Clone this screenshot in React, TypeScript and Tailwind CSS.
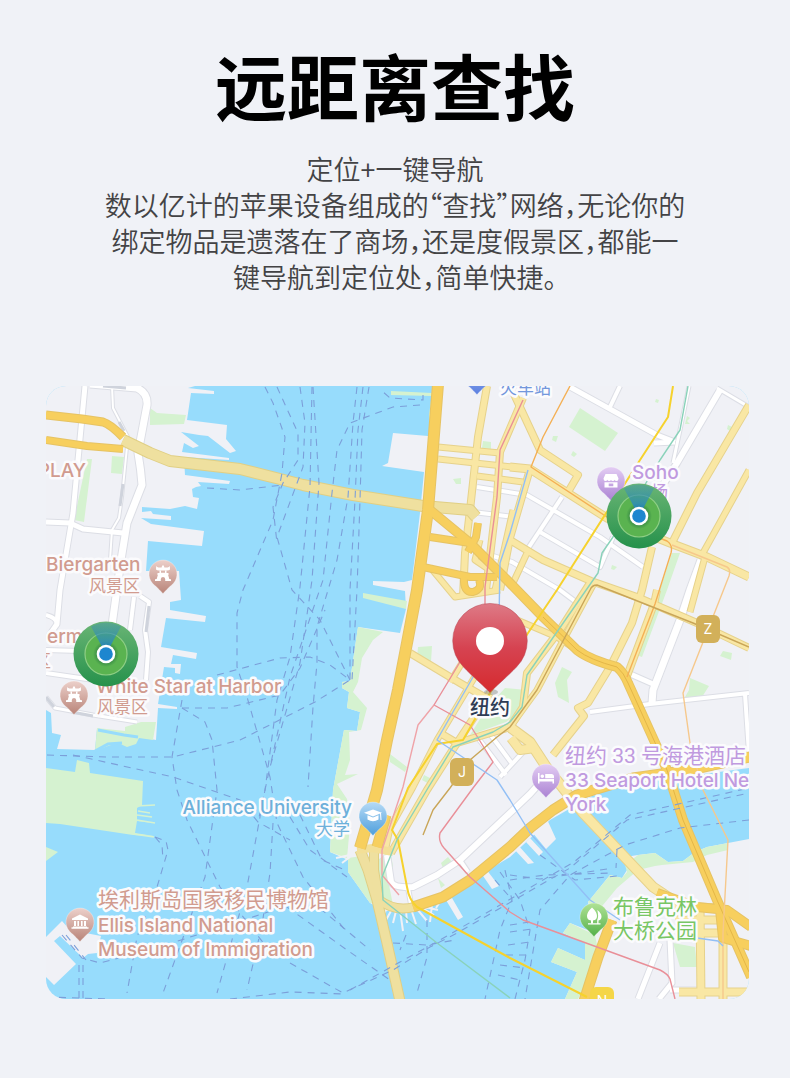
import React from 'react';

type Road = { d: string; w: number };
type Line = { d: string; color: string; w?: number };

const LAND = [
  'M46 386L195 386 188 388 214 391 214 394 191 393 187 420 227 425 226 439 236 451 230 453 208 436 199 435 181 432 199 446 193 448 184 443 182 452 229 458 229 460 184 457 185 475 230 481 229 484 198 482 201 486 196 487 192 489 193 497 199 498 197 509 185 506 170 509 142 507 142 512 151 511 153 514 171 516 171 520 141 518 151 524 204 531 202 546 148 541 146 571 179 571 181 600 170 602 170 610 206 616 205 622 166 618 161 647 197 653 196 659 173 655 171 664 181 664 180 674 175 673 175 668 164 667 158 704 177 707 177 709 158 708 156 740 97 729 95 750 57 749 61 735 52 733 51 713 46 710Z',
  'M46 937L62 921 70 930 101 936 97 953 88 954 83 958 60 936 54 941 76 964 54 985 46 977Z',
  'M432 386L431 421 428 436 393 433 388 463 382 466 424 472 420 513 412 580 404 582 373 581 373 585 405 591 406 609 400 633 358 627 350 681 342 682 342 688 349 692 347 708 360 712 357 731 344 730 333 790 330 852 348 860 348 872 370 903 385 911 427 909 457 890 480 875 510 857 550 820 590 797 620 785 749 768 749 386Z',
  'M749 839L728 843 707 847 695 852 683 861 668 862 655 853 638 855 625 857 627 870 622 878 610 875 588 902 595 933 570 923 563 933 585 943 585 960 558 948 551 962 577 972 565 999 749 999Z',
  'M518 845L534 863 528 864 514 849ZM530 838L543 852 539 856 526 842ZM545 815L556 839 546 849 532 832Z',
  'M452 898L463 917 458 920 446 900ZM486 869L499 886 492 889 481 873Z',
];

const PARKS = [
  'M150 408L157 413 186 415 184 424 150 425Z',
  'M112 456L124 457 122 474 111 473Z',
  'M87 459L92 459 84 522 74 520Z',
  'M46 768L75 772 77 760 89 763 90 773 143 781 142 805 137 808 137 820 153 823 137 821 135 833 154 836 133 835 60 824 46 823Z',
  'M46 847L58 852 46 861Z',
  'M97 728L125 731 125 727 141 722 156 722 153 740 139 738 136 744 127 747 118 743 108 746 95 751Z',
  'M391 391L432 393 432 396 391 395ZM432 393L434 430 430 424 429 415Z',
  'M363 593L407 601 406 609 363 598Z',
  'M358 627L383 632 373 640 362 658 358 682 353 692 367 708 361 730 349 732 350 760 345 775 358 774 337 784 347 799 350 825 347 858 330 852 333 790 344 730 357 731 360 712 347 708 349 692 342 688 342 682 350 681Z',
  'M348 858L362 856 378 860 390 850 393 866 388 880 393 905 370 903 348 872Z',
  'M580 408L618 433 605 451 569 427Z',
  'M672 553L680 553 667 590 642 657 636 655 654 608Z',
  'M562 667L572 672 567 680 569 703 558 697 555 683Z',
  'M690 678L709 686 702 697 685 697 689 690Z',
  'M723 651L732 653 731 660 720 656Z',
  'M418 647L432 646 431 662 417 658Z',
  'M390 754L407 767 405 772 390 762ZM424 775L434 780 431 785 422 780Z',
  'M470 735L487 708 505 688 527 690 520 712 506 722Z',
  'M483 441L491 442 491 449 482 448ZM453 479L461 478 461 484 456 484ZM553 436L558 436 556 442 552 440ZM573 451L577 454 574 457 571 455ZM656 399L659 400 658 403 655 402ZM687 416L690 418 687 421 690 424 685 424ZM728 425L732 427 730 431 727 429ZM612 565L617 567 614 570 611 569ZM441 863L448 857 452 862 443 868ZM438 878L445 885 441 888Z',
  'M728 843L707 847 695 852 683 861 668 862 655 853 638 855 625 865 627 872 622 878 610 875 588 902 595 915 603 905 617 888 638 870 655 866 662 865 693 862 707 855 728 850Z',
  'M570 923L595 935 598 950 585 985 578 999 565 999 577 972 551 962 558 948 585 960 585 943 563 933Z',
  'M673 943L695 947 697 967 680 967Z',
];

const WHITE_ROADS: Road[] = [
  { d: 'M85 386L73 513 60 590 57 624 46 640', w: 5 },
  { d: 'M46 615Q58 618 57 626', w: 4 },
  { d: 'M90 384L137 388Q148 393 147 405L138 453Q141 470 142 485L127 523 121 560 112 625', w: 7 },
  { d: 'M112 386L113 408 128 437 122 497 119 518 112 530 110 560', w: 2 },
  { d: 'M46 522L70 523 83 529 123 533', w: 5 },
  { d: 'M134 597L130 630M140 596L149 602 145 630 148 652 146 680', w: 4 },
  { d: 'M46 650L80 651M46 673L87 679 140 686', w: 4 },
  { d: 'M46 697L55 708 93 715 137 722', w: 3 },
  { d: 'M570 387L657 435 675 442M654 443L675 442', w: 5 },
  { d: 'M620 386L610 407', w: 4 },
  { d: 'M720 390L677 463 650 505', w: 6 },
  { d: 'M689 386L680 430 673 463M717 388L749 407', w: 3 },
  { d: 'M477 487L527 495 600 537 643 567M473 512L515 517', w: 4 },
  { d: 'M562 497L527 550M540 532L600 567 613 537', w: 4 },
  { d: 'M490 555L512 562 560 590 580 605', w: 4 },
  { d: 'M701 560L690 590 680 620 653 690 652 703', w: 7 },
  { d: 'M628 673L653 684', w: 5 },
  { d: 'M590 712L650 704 749 693M745 694L749 753', w: 4 },
  { d: 'M387 855L391 882Q394 888 413 887L437 875 460 860 510 813 530 794 548 774', w: 6 },
  { d: 'M460 860L468 872M408 888L411 904', w: 4 },
  { d: 'M478 738L506 775M490 734L513 765M525 750L500 777', w: 4 },
  { d: 'M660 943L638 999M670 940L672 983 659 999M670 990L700 990', w: 5 },
];

const PALE_ROADS: Road[] = [
  { d: 'M487 386L478 437 470 510 465 553 463 597', w: 6 },
  { d: 'M438 447L500 453M438 459L512 467M477 476L523 482', w: 5 },
  { d: 'M510 467L530 469 607 518 670 543 707 557 749 577', w: 7 },
  { d: 'M513 392L540 450 578 475 568 492', w: 6 },
  { d: 'M749 405L697 493 673 541', w: 6 },
  { d: 'M749 470L703 553M705 557L690 612', w: 5 },
  { d: 'M652 547L642 590 632 623 610 667 588 703 578 708 584 716 553 755', w: 6 },
  { d: 'M510 540L543 560 591 581 637 597 697 623 749 648', w: 6 },
  { d: 'M527 553L513 583', w: 5 },
  { d: 'M523 398L500 452 497 497 486 590', w: 6 },
  { d: 'M530 469L510 538 500 590', w: 6 },
  { d: 'M657 590L654 604 627 676', w: 6 },
  { d: 'M410 653L460 683 495 703', w: 6 },
  { d: 'M510 617L557 637 577 650', w: 5 },
  { d: 'M467 655L450 682', w: 5 },
  { d: 'M480 668L437 740 413 787 390 828 385 852', w: 5 },
  { d: 'M490 693L457 743 427 790 391 853', w: 6 },
  { d: 'M440 733L457 743 510 727 523 707 527 673 560 630 590 583', w: 6 },
  { d: 'M510 727L537 690 565 637 593 585', w: 5 },
  { d: 'M480 540L475 560 512 585M513 510L495 590M430 567L455 597 500 590', w: 5 },
  { d: 'M511 728L530 742 547 768 583 813 653 887 680 905', w: 9 },
  { d: 'M511 738L520 750 535 748', w: 8 },
  { d: 'M660 905L718 908M675 920L718 920M675 933L718 933M700 905L701 999M723 925L723 999M679 992L749 992', w: 7 },
];

const TUNNELS: Road[] = [
  { d: 'M123 440L150 453 170 461 240 469 280 479 303 485 353 495 423 506 470 510 476 517', w: 10 },
  { d: 'M360 850L368 870 377 900 387 943 400 1001', w: 9 },
  { d: 'M374 850L374 870 379 900', w: 8 },
  { d: 'M379 900Q395 912 414 907', w: 8 },
];

const HIGHWAYS: Road[] = [
  { d: 'M46 415L82 419 103 422Q110 424 123 437', w: 7 },
  { d: 'M46 440L87 446 123 449', w: 6 },
  { d: 'M438 384L428 510 417 590 407 643 398 690 387 740 377 790 360 848', w: 10 },
  { d: 'M386 815L377 847', w: 9 },
  { d: 'M413 907L443 897 470 880 510 847 530 828 553 810 577 795 633 778 690 770 750 757', w: 9 },
  { d: 'M430 510L470 543 510 583 543 617 577 650Q590 660 617 667 624 673 628 683L657 747 667 770 683 820 717 900 751 977', w: 8 },
  { d: 'M430 537L470 543M423 567L470 577 497 577M478 523L476 537 468 552', w: 6 },
  { d: 'M464 577Q463 593 473 592 483 589 479 580', w: 6 },
  { d: 'M657 893L697 907 727 910 751 927M751 946L723 938 720 910', w: 8 },
  { d: 'M612 920L598 957 584 1001', w: 9 },
];

const TRANSIT: Line[] = [
  { d: 'M523 400L500 450 497 497 485 587 485 620 460 662 434 705 470 725 493 762 473 788 440 833Q438 841 444 848L470 877 510 912 523 920 660 970Q668 974 670 979L675 999', color: '#e98f98' },
  { d: 'M434 705L418 725 403 787 382 850 382 875 399 895', color: '#efa3a8' },
  { d: 'M570 386L543 437 531 467 607 517 667 541Q673 545 671 553L655 604 627 677', color: '#f4b055' },
  { d: 'M672 545L727 567Q731 569 729 576L683 693 690 743 703 790 728 840 723 933 723 999', color: '#f6c88c' },
  { d: 'M673 386L668 417 640 460 557 590 528 633 490 693 463 740 437 744 408 788 392 830 398 840 407 887Q409 900 417 907L510 958 587 997', color: '#f6d22d', w: 2 },
  { d: 'M688 386L680 430 660 460 613 537 602 553 598 573 527 675 522 707 510 722 493 732 453 747 428 788 397 840 382 877 383 900 437 943 510 998', color: '#8ad2ba' },
  { d: 'M528 470L510 533 500 563 499 620 473 677 437 740 470 762 497 780 510 800 530 833 590 900 620 920M697 938L718 941 723 946', color: '#92bff5' },
  { d: 'M749 647L693 623 597 585Q592 585 590 590L537 690 510 727 497 737 470 760 450 788 433 810 423 835', color: '#c9a558' },
];

const FERRIES = [
  'M265 387L273 403 285 437 282 473 273 520 243 590 237 613 237 667 247 697 270 777 277 823 303 877 345 930',
  'M277 387L298 433 298 460 283 483 273 507 277 543',
  'M300 387L305 423 303 467 277 537 292 590 320 620 350 680',
  'M312 387L310 487 300 587 290 657 277 700 265 790 247 887 217 993',
  'M313 387L319 483 312 580 300 663 270 767 258 822',
  'M357 387L353 423 348 497 337 560 317 627 317 663 313 707 308 787',
  'M363 387L358 430 355 500 350 590 350 680',
  'M369 387L362 430 360 500 357 590 352 680',
  'M423 395L423 400 390 398 382 391',
  'M420 405L393 407 350 423 337 450 332 493 323 580 290 677 270 767',
  'M207 488L240 490 283 485',
  'M217 675L280 658 310 657 330 665 350 680',
  'M182 708L227 708 280 695 300 668 325 610',
  'M182 708L205 722 212 740 217 790 205 877 163 993',
  'M47 755L107 757 173 757 240 740 315 702 350 680',
  'M73 755L173 777 240 800 258 822 290 840',
  'M182 700L172 757 177 790 187 820 220 887 265 945',
  'M155 837L166 841 168 850 157 887 137 937 127 993',
  'M155 837L162 845 163 860',
  'M273 823L270 873 262 925 247 990',
  'M290 817L310 850 347 877M300 815L322 860 345 870',
  'M287 907L347 950 390 980',
  'M310 900L370 950',
  'M290 963L343 993 393 970 430 947 457 933 570 868 627 820 749 793',
  'M350 990L400 962 440 940 574 862 630 815 749 788',
  'M393 943L427 945 455 940M427 920L427 957 417 993M406 935L400 950',
  'M510 875L540 879 607 869M510 880L545 875 612 873',
  'M540 855L575 880 617 876M617 850L616 868',
  'M749 820L680 828 625 845 570 875 540 910 525 999',
  'M500 872L520 900 530 930 525 960 515 999',
  'M505 870L512 900 500 930 485 999M495 880L508 895',
  'M510 925L530 922M510 932L532 929M508 945L530 942M506 955L528 955M500 965L525 968M498 975L520 980',
  'M62 935L82 958 100 963 150 950 290 905',
  'M79 965L79 999M83 965L83 999M66 935L86 960',
  'M46 997L110 999M230 999L290 992 345 994',
];

const PIERS =
  'M386 911L380 916M391 911L386 920M396 911L393 923M400 910L403 931M406 910L407 923M411 909L416 924M417 909L427 921M422 908L434 915M425 907L438 910M350 855L336 858M350 857L342 863M444 895L436 908M432 905L430 922';

const JETTIES = 'M137 806L155 805M138 811L150 813M137 815L152 817M137 820L155 823M133 834L154 837';

const RAILS = 'M103 386L126 388M119 422L124 431M123 484L120 506M149 606L146 632M46 697L54 707M72 712L93 716';

function Roads({ list, fill, edge }: { list: Road[]; fill: string; edge: string }) {
  return (
    <g fill="none" strokeLinejoin="round" strokeLinecap="butt">
      {list.map((r) => (
        <path key={'e' + r.d} d={r.d} stroke={edge} strokeWidth={r.w + 2} />
      ))}
      {list.map((r) => (
        <path key={r.d} d={r.d} stroke={fill} strokeWidth={r.w} />
      ))}
    </g>
  );
}

const PIN_COLORS = {
  rose: ['#ecd0ca', '#b98479'],
  violet: ['#e3cdf3', '#ab83d3'],
  sky: ['#b5daf6', '#4f9fdc'],
  leaf: ['#b0e396', '#55b04a'],
  indigo: ['#9db8ef', '#5b7fe0'],
};
type Tone = keyof typeof PIN_COLORS;

function Pin({ x, y, tone, children }: { x: number; y: number; tone: Tone; children?: React.ReactNode }) {
  return (
    <g transform={`translate(${x} ${y})`}>
      <path
        d="M0 19.5C-1.5 18-5 14-8.5 11.2A14 14 0 1 1 8.5 11.2C5 14 1.5 18 0 19.5Z"
        fill={`url(#pin-${tone})`}
        stroke="#fff"
        strokeOpacity=".5"
        strokeWidth=".6"
      />
      <g fill="#fff">{children}</g>
    </g>
  );
}

const Pagoda = () => (
  <g>
    <path d="M-.8-8.500L.8-8.500 1.400-6.500 4.500-6.500Q6-6.800 6.800-8L7-4.500Q6-3.500 4-3.500L-4-3.500Q-6-3.500-7-4.500L-6.800-8Q-6-6.800-4.500-6.500L-1.400-6.500Z" />
    <path d="M-3.500-3.500L-2-3.500-2-1.300 2-1.300 2-3.500 3.500-3.500 3.500-1 5.500-1 5.500 1-5.500 1-5.500-1-3.500-1Z" />
    <path d="M-5 .5L5 .5 6.300 5 8 5.300 8 7 2.200 7 2.200 5Q2 3 0 3-2 3-2.200 5L-2.200 7-8 7-8 5.300-6.300 5Z" />
  </g>
);

const Museum = () => (
  <path d="M0-7.5L8-3.5 8-2-8-2-8-3.5ZM-6-1L-4-1-4 4-6 4ZM-2.6-1L-1-1-1 4-2.6 4ZM1-1L2.6-1 2.6 4 1 4ZM4-1L6-1 6 4 4 4ZM-7 4.4L7 4.4 7 5.3 8.5 5.3 8.5 6.8-8.5 6.8-8.5 5.3-7 5.3Z" />
);

const Shop = () => (
  <path
    fillRule="evenodd"
    d="M-5.5-7L5.5-7 7.5-2.5Q7.5 0 5.5 0 4 0 3.7-1.2 3.3 0 1.8 0 .3 0 0-1.2-.3 0-1.8 0-3.3 0-3.7-1.2-4 0-5.5 0-7.5 0-7.5-2.5ZM-6.5 1.2L6.5 1.2 6.5 6.5-6.5 6.5ZM-2.3 2.4L-2.3 5.2 2.3 5.2 2.3 2.4Z"
  />
);

const Cap = () => (
  <g>
    <path d="M0-6.5L9-3.2 0 .4-9-3.2Z" />
    <path d="M-5.5-.8L0 1.5 5.5-.8 5.5 3.5Q0 6.8-5.5 3.5Z" />
    <path d="M7.5-3L8 4" stroke="#fff" strokeWidth="1" fill="none" />
  </g>
);

const Bed = () => (
  <path d="M-8-5L-6.5-5-6.5 1 8 1 8 5.5 6.5 5.5 6.5 3.5-6.5 3.5-6.5 5.5-8 5.5ZM-5.5-1.7A1.8 1.8 0 1 1-1.9-1.7 1.8 1.8 0 1 1-5.5-1.7ZM-.8-4L5.5-4Q8-4 8-1.5L8 .2-.8 .2Z" />
);

const Trees = () => (
  <g>
    <path d="M-2-9.5Q3-5 3-1 3 3-1 3.5L-1 6.5-3 6.5-3 3.5Q-7 3-7-1-7-5-2-9.5Z" />
    <path d="M3.2-7Q7.5-4 7.5-.5 7.5 3 4.5 3.4L4.5 6.5 3.2 6.5 3.2 3Q5-1 3.2-7ZM-6 6.2L6.5 6.2 6.5 7.5-6 7.5Z" />
  </g>
);

const PINS: { x: number; y: number; tone: Tone; icon?: React.ReactNode }[] = [
  { x: 477, y: 375, tone: 'indigo' },
  { x: 163, y: 574, tone: 'rose', icon: <Pagoda /> },
  { x: 74, y: 695, tone: 'rose', icon: <Pagoda /> },
  { x: 80, y: 922, tone: 'rose', icon: <Museum /> },
  { x: 611, y: 481, tone: 'violet', icon: <Shop /> },
  { x: 546, y: 778, tone: 'violet', icon: <Bed /> },
  { x: 373, y: 816, tone: 'sky', icon: <Cap /> },
  { x: 594, y: 917, tone: 'leaf', icon: <Trees /> },
];

type Kind = 'latin' | 'small' | 'large';
type Label = { x: number; y: number; text: string; color: string; kind: Kind; end?: boolean };
const ROSE = '#d19b8f';
const VIOLET = '#c09adf';
const SKY = '#6db0da';
const LEAF = '#78c664';

const LABEL_STYLE: Record<Kind, string> = {
  latin: "text-[19px] font-medium font-['Inter',sans-serif]",
  small: 'text-[17px]',
  large: "text-[21px] font-['Roboto','Noto_Sans_CJK_SC',sans-serif]",
};

const LABELS: Label[] = [
  { x: 500, y: 394, text: '火车站', color: '#7397dc', kind: 'small' },
  { x: 86, y: 477, text: 'PLAY', color: ROSE, kind: 'latin', end: true },
  { x: 46, y: 571, text: 'Biergarten', color: ROSE, kind: 'latin' },
  { x: 89, y: 592, text: '风景区', color: ROSE, kind: 'small' },
  { x: 47, y: 643, text: 'erm', color: ROSE, kind: 'latin' },
  { x: 51, y: 667, text: '区', color: ROSE, kind: 'small', end: true },
  { x: 96, y: 693, text: 'White Star at Harbor', color: ROSE, kind: 'latin' },
  { x: 97, y: 713, text: '风景区', color: ROSE, kind: 'small' },
  { x: 352, y: 814, text: 'Alliance University', color: SKY, kind: 'latin', end: true },
  { x: 350, y: 835, text: '大学', color: SKY, kind: 'small', end: true },
  { x: 98, y: 907, text: '埃利斯岛国家移民博物馆', color: ROSE, kind: 'large' },
  { x: 98, y: 932, text: 'Ellis Island National', color: ROSE, kind: 'latin' },
  { x: 98, y: 956, text: 'Museum of Immigration', color: ROSE, kind: 'latin' },
  { x: 632, y: 479, text: 'Soho', color: VIOLET, kind: 'latin' },
  { x: 668, y: 498, text: '场', color: VIOLET, kind: 'small', end: true },
  { x: 565, y: 763, text: '纽约 33 号海港酒店', color: VIOLET, kind: 'large' },
  { x: 565, y: 787, text: '33 Seaport Hotel New', color: VIOLET, kind: 'latin' },
  { x: 565, y: 811, text: 'York', color: VIOLET, kind: 'latin' },
  { x: 613, y: 914, text: '布鲁克林', color: LEAF, kind: 'large' },
  { x: 613, y: 938, text: '大桥公园', color: LEAF, kind: 'large' },
];

function Beacon({ x, y }: { x: number; y: number }) {
  return (
    <g transform={`translate(${x} ${y})`}>
      <circle r="32.5" fill="url(#beacon)" />
      <circle r="21" fill="#5ab350" stroke="#8fcf85" strokeWidth="1.2" />
      <circle r="13" fill="url(#glow)" />
      <path d="M0 0L-15-27.5A32 32 0 0 1 15-27.5Z" fill="url(#beam)" />
      <circle r="9.3" fill="#fff" />
      <circle r="6.8" fill="#1d86cf" />
    </g>
  );
}

function LineBadge({ x, y, letter, color }: { x: number; y: number; letter: string; color: string }) {
  return (
    <g>
      <rect x={x - 12} y={y - 14} width="24" height="28" rx="6" fill={color} />
      <text x={x} y={y + 5} textAnchor="middle" fontSize="14" fill="#fff">
        {letter}
      </text>
    </g>
  );
}

function CityMap() {
  return (
    <svg
      viewBox="46 386 703 613"
      className="block h-auto w-full font-['Inter','Noto_Sans_CJK_SC',sans-serif]"
      role="img"
      aria-label="地图"
    >
      <defs>
        {(Object.keys(PIN_COLORS) as Tone[]).map((t) => (
          <linearGradient key={t} id={`pin-${t}`} x1="0" y1="0" x2="0" y2="1">
            <stop offset="0" stopColor={PIN_COLORS[t][0]} />
            <stop offset="1" stopColor={PIN_COLORS[t][1]} />
          </linearGradient>
        ))}
        <linearGradient id="beacon" x1="0" y1="0" x2="0" y2="1">
          <stop offset="0" stopColor="#6ab575" />
          <stop offset="1" stopColor="#25914b" />
        </linearGradient>
        <linearGradient id="beam" x1="0" y1="0" x2="0" y2="1">
          <stop offset="0" stopColor="#3f93b0" stopOpacity=".4" />
          <stop offset="1" stopColor="#1b7fd0" />
        </linearGradient>
        <radialGradient id="glow">
          <stop offset=".6" stopColor="#1c6b3c" stopOpacity=".6" />
          <stop offset="1" stopColor="#1c6b3c" stopOpacity="0" />
        </radialGradient>
        <linearGradient id="main-pin" x1="0" y1="0" x2="0" y2="1">
          <stop offset="0" stopColor="#de7a86" />
          <stop offset=".5" stopColor="#d64351" />
          <stop offset="1" stopColor="#d62a2e" />
        </linearGradient>
      </defs>

      <rect x="46" y="386" width="703" height="613" fill="#97dcfc" />
      <g fill="#f0f1f6">
        {LAND.map((d) => (
          <path key={d} d={d} />
        ))}
      </g>
      <g fill="#d5f2d0">
        {PARKS.map((d) => (
          <path key={d} d={d} />
        ))}
      </g>
      <path d="M98 730L124 735 138 737M95 751L108 744 122 743" stroke="#97dcfc" strokeWidth="3" fill="none" />
      <path d={PIERS} stroke="#f0f1f6" strokeWidth="2" fill="none" />
      <path d={JETTIES} stroke="#d5f2d0" strokeWidth="1.5" fill="none" />

      <Roads list={WHITE_ROADS} fill="#ffffff" edge="#dcdee5" />
      <path d={RAILS} stroke="#cfd3dc" strokeWidth="3" fill="none" />
      <Roads list={PALE_ROADS} fill="#f9e7a4" edge="#e6d28c" />
      <Roads list={TUNNELS} fill="#efe09f" edge="#e0cf85" />
      <path d="M357 850L372 848 393 852" stroke="#f3df97" strokeWidth="8" fill="none" />
      <Roads list={HIGHWAYS} fill="#f7cf5e" edge="#e6c364" />
      <path
        d="M543 617L577 650Q590 660 617 667 624 673 628 683L657 747 667 770 683 820 717 900 749 972"
        stroke="#e3b648"
        strokeWidth="1"
        fill="none"
      />

      <g fill="none" stroke="#7c9fd9" strokeWidth="1.1" strokeDasharray="7 6">
        {FERRIES.map((d) => (
          <path key={d} d={d} />
        ))}
      </g>
      <g fill="none" strokeLinejoin="round">
        {TRANSIT.map((t) => (
          <path key={t.d} d={t.d} stroke={t.color} strokeWidth={t.w ?? 1.4} />
        ))}
      </g>

      <LineBadge x={462} y={772} letter="J" color="#d2b05a" />
      <LineBadge x={708} y={629} letter="Z" color="#d2b05a" />
      <LineBadge x={602} y={1001} letter="N" color="#f5d647" />

      {PINS.map((p) => (
        <Pin key={`${p.x}-${p.y}`} x={p.x} y={p.y} tone={p.tone}>
          {p.icon}
        </Pin>
      ))}

      <g stroke="#fbfbfd" strokeWidth="5" strokeLinejoin="round" paintOrder="stroke">
        {LABELS.map((l) => (
          <text
            key={l.text + l.y}
            x={l.x}
            y={l.y}
            className={LABEL_STYLE[l.kind]}
            fill={l.color}
            textAnchor={l.end ? 'end' : 'start'}
          >
            {l.text}
          </text>
        ))}
        <text x="490" y="715" fontSize="20" fontWeight="500" fill="#2f3c55" textAnchor="middle">
          纽约
        </text>
      </g>

      <Beacon x={639} y={516} />
      <Beacon x={106} y={654} />

      <ellipse cx="491" cy="692" rx="7" ry="3" fill="#7a8078" opacity=".4" />
      <path
        d="M490 692.5C486 688 472 676 463.5 667A37.3 37.3 0 1 1 516.5 667C508 676 494 688 490 692.5Z"
        fill="url(#main-pin)"
        stroke="#b8434f"
        strokeOpacity=".5"
      />
      <circle cx="490" cy="641" r="14" fill="#fff" />
    </svg>
  );
}

export default function App() {
  return (
    <main
      lang="zh-CN"
      className="flex min-h-screen flex-col bg-[#f0f2f7] pb-20 font-['Noto_Sans_CJK_SC',sans-serif]"
    >
      <header className="px-6 pt-11 text-center">
        <h1 className="text-[72px] leading-[80px] font-bold text-black">远距离查找</h1>
        <p className="mt-[27px] text-[27px] leading-9 font-[350] text-[#434345] [font-feature-settings:'halt']">
          定位+一键导航
          <br />
          数以亿计的苹果设备组成的“查找”网络，无论你的
          <br />
          绑定物品是遗落在了商场，还是度假景区，都能一
          <br />
          键导航到定位处，简单快捷。
        </p>
      </header>
      <figure className="mt-[91px] mr-[41px] ml-[46px] overflow-hidden rounded-[20px]">
        <CityMap />
      </figure>
    </main>
  );
}
